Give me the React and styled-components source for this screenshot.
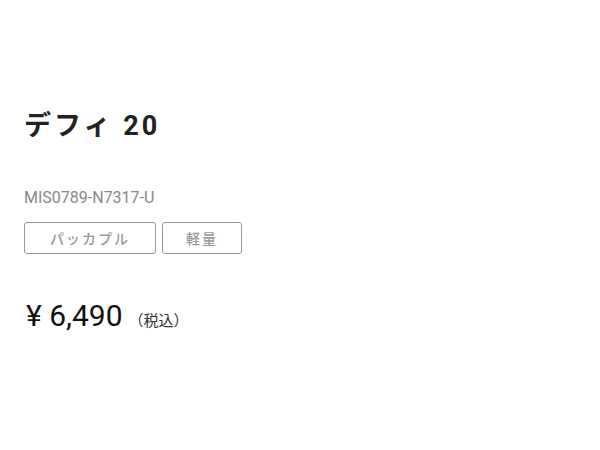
import React from "react";
import styled, { createGlobalStyle } from "styled-components";

const GlobalStyle = createGlobalStyle`
  html, body {
    margin: 0;
    background: #fff;
  }
  body {
    font-family: Roboto, "Noto Sans CJK JP", sans-serif;
    color: #222;
  }
`;

const Page = styled.div`
  padding: 104px 24px 0;
`;

const Title = styled.h1`
  margin: 0;
  font-size: 27px;
  font-weight: 700;
  letter-spacing: 3px;
  line-height: 44px;
  color: #222;
`;

const Code = styled.div`
  margin-top: 40px;
  font-size: 16px;
  color: #888;
  line-height: 20px;
`;

const Tags = styled.ul`
  display: flex;
  gap: 6px;
  margin: 14px 0 0;
  padding: 0;
  list-style: none;
`;

const Tag = styled.li`
  height: 32px;
  box-sizing: border-box;
  padding: 0 ${(p) => p.$pad}px;
  display: flex;
  align-items: center;
  border: 1px solid #999;
  border-radius: 3px;
  font-size: 14px;
  font-weight: 500;
  letter-spacing: 2px;
  color: #999;
`;

const PriceRow = styled.div`
  display: flex;
  align-items: baseline;
  gap: 6px;
  margin-top: 44px;
  padding-left: 2px;
`;

const Price = styled.span`
  font-size: 30px;
  color: #111;
`;

const Tax = styled.span`
  font-size: 15px;
  color: #333;
`;

const tags = [
  { label: "パッカプル", pad: 25 },
  { label: "軽量", pad: 23 },
];

export default function App() {
  return (
    <>
      <GlobalStyle />
      <Page>
        <Title>デフィ 20</Title>
        <Code>MIS0789-N7317-U</Code>
        <Tags>
          {tags.map((t) => (
            <Tag key={t.label} $pad={t.pad}>{t.label}</Tag>
          ))}
        </Tags>
        <PriceRow>
          <Price>¥ 6,490</Price>
          <Tax>（税込）</Tax>
        </PriceRow>
      </Page>
    </>
  );
}
